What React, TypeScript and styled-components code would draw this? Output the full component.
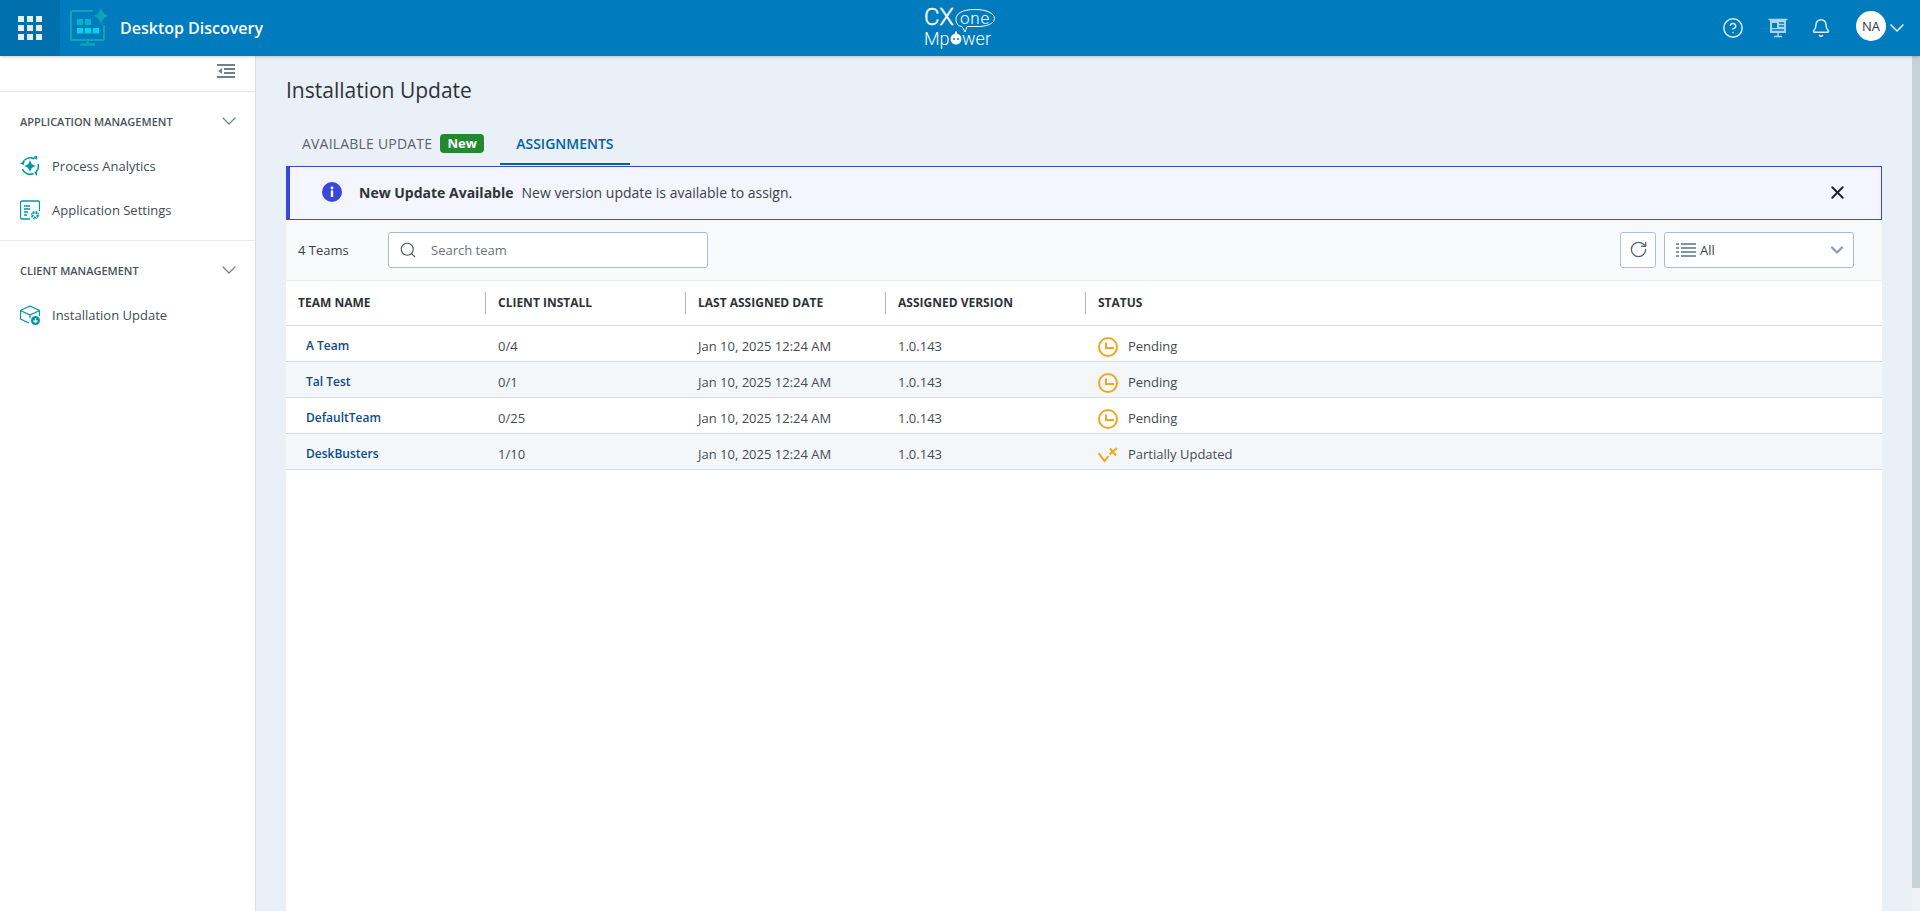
import React from "react";
import styled, {createGlobalStyle} from "styled-components";
import {Bell, ChevronDown, CircleHelp, RotateCw, Search, X} from "lucide-react";

const GlobalStyle = createGlobalStyle`
    html, body {
        margin: 0;
        height: 100%;
        overflow: hidden;
        font-family: "Open Sans", "Liberation Sans", sans-serif;
        color: #2e3338;
    }
    * {
        box-sizing: border-box;
    }
`;

const Page = styled.div`
    height: 911px;
    display: flex;
    flex-direction: column;
    background-color: #e9f0f8;
`;

const TopBar = styled.header`
    height: 56px;
    flex-shrink: 0;
    display: grid;
    grid-template-columns: 1fr auto 1fr;
    align-items: center;
    background-color: #007cbe;
    box-shadow: 0 1px 3px rgba(0, 0, 0, 0.2);
    position: relative;
    z-index: 2;
`;

const TopLeft = styled.div`
    height: 100%;
    display: flex;
    align-items: center;
`;

const WaffleCell = styled.div`
    width: 60px;
    height: 100%;
    display: flex;
    align-items: center;
    justify-content: center;
    background-color: #006fae;
`;

const Waffle = styled.div`
    display: grid;
    grid-template-columns: repeat(3, 6px);
    grid-auto-rows: 6px;
    gap: 3px;
`;

const WaffleDot = styled.span`
    background-color: #e6eff6;
`;

const AppLogo = styled.svg`
    width: 42px;
    height: 42px;
    margin-left: 9px;
`;

const AppName = styled.span`
    margin-left: 9px;
    font-size: 16px;
    font-weight: 600;
    color: #fff;
`;

const TopRight = styled.div`
    display: flex;
    align-items: center;
    justify-content: flex-end;
    padding-right: 11px;
    color: #fff;
`;

const TopIcon = styled.span<{$gap: number}>`
    display: flex;
    margin-right: ${props => props.$gap}px;
    color: #dcedf7;
`;

const Avatar = styled.span`
    width: 30px;
    height: 30px;
    margin-bottom: 4px;
    border-radius: 50%;
    display: flex;
    align-items: center;
    justify-content: center;
    background-color: #fff;
    color: #33383d;
    font-size: 13px;
    font-weight: 500;
`;

const AvatarChevron = styled(ChevronDown)`
    margin-left: -1px;
    color: #fff;
`;

const Body = styled.div`
    flex: 1;
    min-height: 0;
    display: flex;
`;

const Sidebar = styled.aside`
    width: 256px;
    flex-shrink: 0;
    background-color: #fff;
    border-right: 1px solid #dcdfe2;
`;

const CollapseRow = styled.div`
    height: 36px;
    display: flex;
    align-items: center;
    justify-content: flex-end;
    padding: 0 20px 6px 0;
    border-bottom: 1px solid #e4e6e8;
`;

const NavSection = styled.section<{$divided?: boolean}>`
    padding-bottom: 8px;
    border-bottom: ${props => (props.$divided ? "1px solid #e9ebed" : "none")};
`;

const NavHeading = styled.div`
    height: 52px;
    display: flex;
    align-items: center;
    justify-content: space-between;
    padding: 6px 14px 0 20px;
    font-size: 11px;
    font-weight: 600;
    color: #4a5259;
    text-transform: uppercase;
`;

const NavChevron = styled(ChevronDown)`
    color: #6f7f8c;
`;

const NavItem = styled.div`
    height: 44px;
    display: flex;
    align-items: center;
    gap: 12px;
    padding-left: 20px;
    font-size: 13px;
    color: #444b52;
`;

const Main = styled.main`
    flex: 1;
    min-width: 0;
    display: flex;
    flex-direction: column;
    padding: 0 30px;
`;

const PageTitle = styled.h1`
    margin: 21px 0 0;
    font-size: 21px;
    line-height: 26px;
    font-weight: 500;
    color: #2e3338;
`;

const Tabs = styled.nav`
    height: 42px;
    margin-top: 20px;
    display: flex;
`;

const Tab = styled.div<{$active?: boolean}>`
    height: 42px;
    display: flex;
    align-items: center;
    gap: 8px;
    padding: 0 16px;
    font-size: 14px;
    font-weight: ${props => (props.$active ? 600 : 500)};
    letter-spacing: ${props => (props.$active ? 0 : 0.2)}px;
    color: ${props => (props.$active ? "#00629e" : "#5b6269")};
    border-bottom: 2px solid ${props => (props.$active ? "#00629e" : "transparent")};
    text-transform: uppercase;
`;

const NewBadge = styled.span`
    height: 19px;
    width: 44px;
    border-radius: 4px;
    display: flex;
    align-items: center;
    justify-content: center;
    background-color: #23882f;
    color: #fff;
    font-size: 13px;
    font-weight: 700;
    letter-spacing: 0;
    text-transform: none;
`;

const Panel = styled.div`
    flex: 1;
    margin-top: 1px;
    display: flex;
    flex-direction: column;
    background-color: #fff;
`;

const Alert = styled.div`
    height: 54px;
    flex-shrink: 0;
    display: flex;
    align-items: center;
    padding: 0 33px 2px 32px;
    background-color: #f4f5fe;
    border: 1px solid #3a47d8;
    border-left-width: 4px;
    font-size: 14px;
`;

const AlertTitle = styled.strong`
    margin-left: 17px;
    font-weight: 700;
    color: #2e3338;
`;

const AlertText = styled.span`
    margin-left: 8px;
    color: #3c4248;
`;

const AlertClose = styled.span`
    margin-left: auto;
    display: flex;
    color: #1f2327;
`;

const Toolbar = styled.div`
    height: 61px;
    flex-shrink: 0;
    display: flex;
    align-items: center;
    padding: 0 28px 1px 12px;
    background-color: #f7f9fb;
    border-bottom: 1px solid #e9ecef;
`;

const TeamCount = styled.span`
    width: 90px;
    font-size: 13px;
    color: #3c4248;
`;

const SearchBox = styled.div`
    width: 320px;
    height: 36px;
    display: flex;
    align-items: center;
    padding-left: 10px;
    background-color: #fff;
    border: 1px solid #a9bccb;
    border-radius: 3px;
    color: #4d5b66;
`;

const SearchText = styled.span`
    margin-left: 14px;
    font-size: 13px;
    color: #6b7278;
`;

const RefreshButton = styled.div`
    width: 36px;
    height: 36px;
    margin-left: auto;
    display: flex;
    align-items: center;
    justify-content: center;
    background-color: #fff;
    border: 1px solid #a9c4d4;
    border-radius: 3px;
    color: #4d6370;
`;

const Filter = styled.div`
    width: 190px;
    height: 36px;
    margin-left: 8px;
    display: flex;
    align-items: center;
    gap: 4px;
    padding: 0 6px 0 11px;
    background-color: #fff;
    border: 1px solid #a9bccb;
    border-radius: 3px;
    font-size: 13px;
    color: #3c4248;
`;

const FilterArrow = styled.span`
    margin-left: auto;
    display: flex;
    color: #8aa0b0;
`;

const Row = styled.div<{$head?: boolean; $striped?: boolean}>`
    height: ${props => (props.$head ? 45 : 36)}px;
    flex-shrink: 0;
    display: grid;
    grid-template-columns: 200px 200px 200px 200px 1fr;
    align-items: center;
    padding-top: ${props => (props.$head ? 0 : 4)}px;
    background-color: ${props => (props.$striped ? "#f4f7fa" : "#fff")};
    border-bottom: 1px solid ${props => (props.$head ? "#d8dcdf" : "#d5dbe1")};
    font-size: 13px;
    color: #444b52;
`;

const HeadCell = styled.div`
    height: 22px;
    position: relative;
    display: flex;
    align-items: center;
    padding: 0 0 2px 12px;
    font-size: 12px;
    font-weight: 700;
    color: #2e3338;
    text-transform: uppercase;

    &:not(:last-child)::after {
        content: "";
        position: absolute;
        right: 0;
        top: 0;
        bottom: 0;
        width: 1px;
        background-color: #b4b8bb;
    }
`;

const TeamCell = styled.div`
    padding-left: 20px;
    font-weight: 600;
    font-size: 12px;
    color: #0d4a86;
`;

const Cell = styled.div`
    padding-left: 12px;
`;

const StatusCell = styled.div`
    display: flex;
    align-items: center;
    gap: 10px;
    padding-left: 12px;

    svg {
        margin-top: 3px;
    }
`;

const ScrollTrack = styled.div`
    width: 8px;
    flex-shrink: 0;
    display: flex;
    flex-direction: column;
    background-color: #eef3f8;
`;

const ScrollThumb = styled.div`
    flex: 1;
    margin-bottom: 23px;
    background-color: #c8d0d8;
`;

const DesktopLogo = () => (
    <AppLogo viewBox="0 0 42 42" fill="none">
        <path d="M24 4H3.500A1.500 1.500 0 0 0 2 5.500v26A1.500 1.500 0 0 0 3.500 33h30a1.500 1.500 0 0 0 1.500-1.500V18" stroke="#0fa3b8" strokeWidth="2"/>
        <path d="M18.500 33v4M11 37.500h15" stroke="#0fa3b8" strokeWidth="2.400"/>
        <path d="M32 0c1 5.500 3 7.500 8 9-5 1.500-7 3.500-8 9-1-5.500-3-7.500-8-9 5-1.500 7-3.500 8-9Z" fill="#0fa3b8"/>
        <rect x="8" y="12" width="6" height="6" fill="#00b4cc"/>
        <rect x="16" y="12" width="6" height="6" fill="#00b4cc"/>
        <rect x="8" y="21" width="6" height="5.500" fill="#00d5e8"/>
        <rect x="16" y="21" width="6" height="5.500" fill="#00d5e8"/>
        <rect x="24" y="21" width="6" height="5.500" fill="#00d5e8"/>
    </AppLogo>
);

const CxLogo = () => (
    <svg width="72" height="54" viewBox="0 -4 72 54" fill="none">
        <text x="0" y="20" fontFamily="Roboto, sans-serif" fontWeight="300" fontSize="24" letterSpacing="-0.3" stroke="#fff" strokeWidth="0.4" fill="#fff">CX</text>
        <path d="M38 21.500C34 21.500 32 18 32 14.500 32 8.500 38 4.500 51 4.500 62 4.500 70.500 8 70.500 13.500 70.500 18.500 63 22 51 21.500 47 21.500 44 21.500 43 21.500L41 27 38 21.500Z" stroke="#fff" strokeWidth="1"/>
        <text x="36" y="18.500" fontFamily="Roboto, sans-serif" fontWeight="300" fontSize="17" letterSpacing="0.8" fill="#fff">one</text>
        <text x="0" y="40" fontFamily="Roboto, sans-serif" fontWeight="300" fontSize="18" fill="#fff">Mp</text>
        <circle cx="32" cy="34" r="5.500" fill="#fff"/>
        <rect x="31" y="26.500" width="2" height="3" fill="#fff"/>
        <circle cx="30" cy="34" r="1" fill="#007cbe"/>
        <circle cx="34" cy="34" r="1" fill="#007cbe"/>
        <text x="38" y="40" fontFamily="Roboto, sans-serif" fontWeight="300" fontSize="18" fill="#fff">wer</text>
    </svg>
);

const BoardIcon = () => (
    <svg width="20" height="20" viewBox="0 0 20 20" fill="none">
        <path d="M0.500 1.500h19M10 15v3M6 18.500h8" stroke="#a9d5ee" strokeWidth="1.500"/>
        <rect x="2" y="2" width="16" height="13" fill="#a9d5ee"/>
        <rect x="4" y="5" width="5" height="5" fill="#007cbe"/>
        <path d="M11 5h5M11 8h5M4 12h12" stroke="#007cbe" strokeWidth="1.300"/>
    </svg>
);

const CollapseIcon = () => (
    <svg width="18" height="14" viewBox="0 0 18 14" fill="#70808c">
        <rect x="0" y="0" width="18" height="2"/>
        <rect x="7" y="4" width="11" height="2"/>
        <rect x="7" y="8" width="11" height="2"/>
        <rect x="0" y="12" width="18" height="2"/>
        <path d="M5 4v6L1 7l4-3Z"/>
    </svg>
);

const AnalyticsIcon = () => (
    <svg width="20" height="20" viewBox="0 0 20 20" fill="none" stroke="#0097a7" strokeWidth="1.500">
        <path d="M2.500 7A8 8 0 0 1 14 3M18 8a8 8 0 0 1-2 8M13.500 17.500A8 8 0 0 1 2.500 13"/>
        <path d="M10 3.500c.7 4 2.500 5.800 6.500 6.500-4 .7-5.800 2.500-6.500 6.500-.7-4-2.500-5.800-6.500-6.500 4-.7 5.800-2.500 6.500-6.500Z" fill="#0097a7" stroke="none"/>
        <path d="M0 7.500l4 1.500.5-4ZM13 1l3.500 3 1-4.500ZM14 15.500l3.500 1-1 3.500Z" fill="#0097a7" stroke="none"/>
    </svg>
);

const SettingsIcon = () => (
    <svg width="20" height="20" viewBox="0 0 20 20" fill="none" stroke="#0097a7" strokeWidth="1.300">
        <path d="M10 19H2a1.500 1.500 0 0 1-1.500-1.500v-15A1.500 1.500 0 0 1 2 1h16a1.500 1.500 0 0 1 1.500 1.500V11"/>
        <path d="M4 6h6M4 9h6M4 12h4M4 15h3"/>
        <circle cx="15" cy="15" r="2.500" strokeWidth="2" strokeDasharray="2 1"/>
        <circle cx="15" cy="15" r="3.800" strokeWidth="1" strokeDasharray="1.500 1.500"/>
    </svg>
);

const PackageIcon = () => (
    <svg width="20" height="20" viewBox="0 0 20 20" fill="none" stroke="#0097a7" strokeWidth="1.300">
        <path d="M10 1L19.500 5.500V11M10 1L.5 5.500V14L9 18M.5 5.500L10 10l9.500-4.500M10 10v3"/>
        <circle cx="15.500" cy="15.500" r="4.500" fill="#0097a7" stroke="none"/>
        <path d="M15.500 13v4.500M13.500 15.500l2 2 2-2" stroke="#fff" strokeWidth="1.200"/>
    </svg>
);

const InfoIcon = () => (
    <svg width="20" height="20" viewBox="0 0 20 20">
        <circle cx="10" cy="10" r="10" fill="#3a47d8"/>
        <rect x="8.800" y="8.500" width="2.400" height="6.500" fill="#fff"/>
        <circle cx="10" cy="6" r="1.400" fill="#fff"/>
    </svg>
);

const ListIcon = () => (
    <svg width="20" height="16" viewBox="0 0 20 16" fill="#8097a8">
        <rect x="0" y="1" width="3" height="2"/>
        <rect x="5" y="1" width="15" height="2"/>
        <rect x="0" y="5" width="3" height="2"/>
        <rect x="5" y="5" width="15" height="2"/>
        <rect x="0" y="9" width="3" height="2"/>
        <rect x="5" y="9" width="15" height="2"/>
        <rect x="0" y="13" width="3" height="2"/>
        <rect x="5" y="13" width="15" height="2"/>
    </svg>
);

const ClockIcon = () => (
    <svg width="20" height="20" viewBox="0 0 20 20" fill="none" stroke="#f0a61e" strokeWidth="2">
        <circle cx="10" cy="10" r="9"/>
        <path d="M8 5.500V11H16"/>
    </svg>
);

const PartialIcon = () => (
    <svg width="20" height="20" viewBox="0 0 20 20" fill="none" stroke="#f0a61e" strokeWidth="2">
        <path d="M0.500 8L6.500 16L10.500 11"/>
        <path d="M11.500 9.500L19 3M12 3.500L18 10.500"/>
    </svg>
);

const teams = [
    {name: "A Team", install: "0/4", partial: false},
    {name: "Tal Test", install: "0/1", partial: false},
    {name: "DefaultTeam", install: "0/25", partial: false},
    {name: "DeskBusters", install: "1/10", partial: true},
];

export default function App(): React.ReactElement {
    return <Page>
        <GlobalStyle/>
        <TopBar>
            <TopLeft>
                <WaffleCell>
                    <Waffle>
                        {Array.from({length: 9}, (_, i) => <WaffleDot key={i}/>)}
                    </Waffle>
                </WaffleCell>
                <DesktopLogo/>
                <AppName>Desktop Discovery</AppName>
            </TopLeft>
            <CxLogo/>
            <TopRight>
                <TopIcon $gap={24}><CircleHelp size={22} strokeWidth={1.6}/></TopIcon>
                <TopIcon $gap={23}><BoardIcon/></TopIcon>
                <TopIcon $gap={25}><Bell size={20} strokeWidth={1.8}/></TopIcon>
                <Avatar>NA</Avatar>
                <AvatarChevron size={24} strokeWidth={1.5}/>
            </TopRight>
        </TopBar>
        <Body>
            <Sidebar>
                <CollapseRow><CollapseIcon/></CollapseRow>
                <NavSection $divided>
                    <NavHeading>
                        Application Management
                        <NavChevron size={24} strokeWidth={1.2}/>
                    </NavHeading>
                    <NavItem><AnalyticsIcon/>Process Analytics</NavItem>
                    <NavItem><SettingsIcon/>Application Settings</NavItem>
                </NavSection>
                <NavSection>
                    <NavHeading>
                        Client Management
                        <NavChevron size={24} strokeWidth={1.2}/>
                    </NavHeading>
                    <NavItem><PackageIcon/>Installation Update</NavItem>
                </NavSection>
            </Sidebar>
            <Main>
                <PageTitle>Installation Update</PageTitle>
                <Tabs>
                    <Tab>Available Update<NewBadge>New</NewBadge></Tab>
                    <Tab $active>Assignments</Tab>
                </Tabs>
                <Panel>
                    <Alert>
                        <InfoIcon/>
                        <AlertTitle>New Update Available</AlertTitle>
                        <AlertText>New version update is available to assign.</AlertText>
                        <AlertClose><X size={21} strokeWidth={2.2}/></AlertClose>
                    </Alert>
                    <Toolbar>
                        <TeamCount>4 Teams</TeamCount>
                        <SearchBox>
                            <Search size={18} strokeWidth={1.5}/>
                            <SearchText>Search team</SearchText>
                        </SearchBox>
                        <RefreshButton><RotateCw size={19} strokeWidth={1.6}/></RefreshButton>
                        <Filter>
                            <ListIcon/>
                            All
                            <FilterArrow><ChevronDown size={20} strokeWidth={2.8}/></FilterArrow>
                        </Filter>
                    </Toolbar>
                    <Row $head>
                        <HeadCell>Team Name</HeadCell>
                        <HeadCell>Client Install</HeadCell>
                        <HeadCell>Last Assigned Date</HeadCell>
                        <HeadCell>Assigned Version</HeadCell>
                        <HeadCell>Status</HeadCell>
                    </Row>
                    {teams.map((team, i) => (
                        <Row key={team.name} $striped={i % 2 === 1}>
                            <TeamCell>{team.name}</TeamCell>
                            <Cell>{team.install}</Cell>
                            <Cell>Jan 10, 2025 12:24 AM</Cell>
                            <Cell>1.0.143</Cell>
                            <StatusCell>
                                {team.partial ? <PartialIcon/> : <ClockIcon/>}
                                {team.partial ? "Partially Updated" : "Pending"}
                            </StatusCell>
                        </Row>
                    ))}
                </Panel>
            </Main>
            <ScrollTrack><ScrollThumb/></ScrollTrack>
        </Body>
    </Page>;
}
